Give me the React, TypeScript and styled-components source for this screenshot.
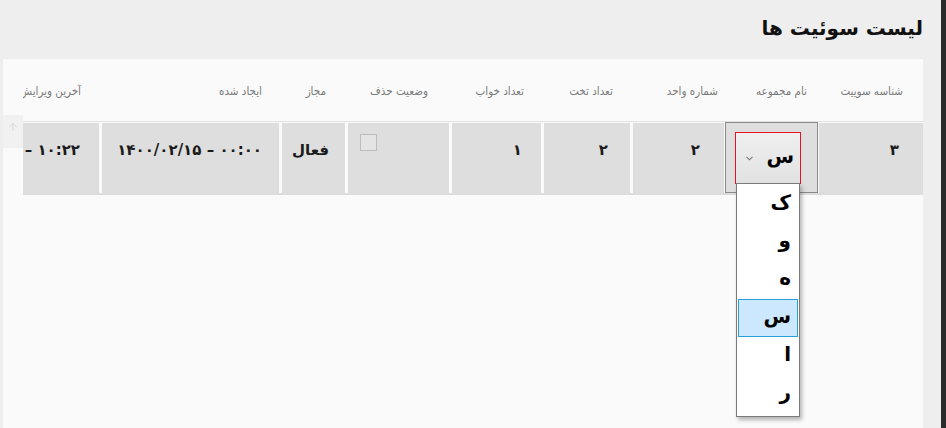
import styled, { createGlobalStyle } from 'styled-components';
import { ArrowUp } from 'lucide-react';

// -- GLOBAL --
const GlobalStyle = createGlobalStyle`
    html, body {
        margin: 0;
        padding: 0;
        height: 100%;
    }
    body {
        background: #eeeeee;
        overflow: hidden;
        font-family: "DejaVu Sans", sans-serif;
    }
    #root {
        height: 100%;
    }
`;

// -- COMPONENTS --
const Page = styled.div`
    display: flex;
    height: 100vh;
    direction: ltr;
`;

const Main = styled.div`
    flex: 1;
    min-width: 0;
    display: flex;
    flex-direction: column;
    padding: 0 18px 0 3px;
    direction: rtl;
`;

const EdgeBar = styled.div`
    width: 5px;
    background: #2b2b2b;
`;

const Title = styled.h1`
    margin: 0;
    height: 59px;
    box-sizing: border-box;
    padding: 0 0 4px 0;
    display: flex;
    align-items: center;
    font-size: 20px;
    font-weight: bold;
    color: #111;
`;

const Panel = styled.div`
    flex: 1;
    display: flex;
    background: #fafafa;
    min-height: 0;
`;

const TableWrap = styled.div`
    width: 900px;
    overflow: hidden;
    position: relative;
`;

const Gutter = styled.div`
    width: 20px;
    padding-top: 56px;
`;

const ScrollUp = styled.div`
    height: 33px;
    background: #f1f1f1;
    display: flex;
    justify-content: center;
    padding-top: 6px;
    box-sizing: border-box;
    color: #cfcfcf;
`;

const Row = styled.div<{ $cols: string }>`
    display: grid;
    grid-template-columns: ${p => p.$cols};
    column-gap: 3px;
`;

const HeadRow = styled(Row)`
    height: 62px;
    border-bottom: 1px solid #e2e2e2;
    align-items: center;
`;

const BodyRow = styled(Row)`
    height: 70px;
    margin-top: 1px;
    border-bottom: 2px solid #dcdcdc;
`;

const HeadCell = styled.div<{ $pad: number }>`
    padding-right: ${p => p.$pad}px;
    font-family: "DejaVu Sans Condensed", "DejaVu Sans", sans-serif;
    font-size: 11.5px;
    color: #7a7a7a;
    white-space: nowrap;
    padding-top: 2px;
`;

const Cell = styled.div<{ $pad: number }>`
    background: #dedede;
    padding: 16px ${p => p.$pad}px 0 0;
    font-size: 15px;
    font-weight: bold;
    line-height: 22px;
    color: #1a1a1a;
    white-space: nowrap;
    min-width: 0;
`;

const CheckCell = styled.div`
    background: #dedede;
    display: flex;
    justify-content: flex-end;
    align-items: flex-start;
    padding: 11px 0 0 12px;
`;

const CheckBox = styled.span`
    width: 15px;
    height: 15px;
    border: 1px solid #bcbcbc;
    background: #e4e4e4;
`;

const SelectCell = styled.div`
    background: #dedede;
    border: 1px solid #8a8a8a;
    margin: -1px -2px 0 -2px;
    padding: 9px 16px 0 0;
    display: flex;
    align-items: flex-start;
`;

const SelectBox = styled.div`
    position: relative;
    width: 66px;
    height: 52px;
    box-sizing: border-box;
    border: 1px solid #e81123;
    background: linear-gradient(#efefef, #e2e2e2);
    display: flex;
    align-items: center;
    justify-content: space-between;
    padding: 0 6px 0 10px;
    direction: rtl;
`;

const SelectValue = styled.span`
    font-size: 20px;
    font-weight: bold;
    color: #000;
    padding-bottom: 4px;
`;

const Chevron = styled.svg`
    width: 7px;
    height: 5px;
`;

const OptionList = styled.ul`
    position: absolute;
    top: 100%;
    right: 0px;
    width: 62px;
    margin: 0;
    padding: 1px 0 3px;
    list-style: none;
    background: #fff;
    border: 1px solid #7a7a7a;
    box-shadow: 2px 3px 4px rgba(0, 0, 0, 0.28);
    z-index: 5;
`;

const Option = styled.li<{ $active?: boolean }>`
    height: 38px;
    box-sizing: border-box;
    margin: 0 1px;
    display: flex;
    align-items: center;
    padding: 0 6px 4px 0;
    font-size: 20px;
    font-weight: bold;
    color: #000;
    background: ${p => (p.$active ? '#cce8ff' : 'transparent')};
    border: 1px solid ${p => (p.$active ? '#26a0da' : 'transparent')};
`;

// -- DATA --
const columns = [
    { head: 'شناسه سوییت', width: 104, headPad: 20 },
    { head: 'نام مجموعه', width: 89, headPad: 9 },
    { head: 'شماره واحد', width: 91, headPad: 6 },
    { head: 'تعداد تخت', width: 86, headPad: 17 },
    { head: 'تعداد خواب', width: 89, headPad: 17 },
    { head: 'وضعیت حذف', width: 101, headPad: 21 },
    { head: 'مجاز', width: 63, headPad: 19 },
    { head: 'ایجاد شده', width: 177, headPad: 17 },
    { head: 'آخرین ویرایش', width: 150, headPad: 18 },
];

const gridCols = columns.map(c => `${c.width}px`).join(' ');

const options = ['ک', 'و', 'ه', 'س', 'ا', 'ر'];

const App = () => {
    return (
        <>
            <GlobalStyle />
            <Page>
                <Main>
                    <Title>لیست سوئیت ها</Title>
                    <Panel>
                        <TableWrap>
                            <HeadRow $cols={gridCols}>
                                {columns.map(c => (
                                    <HeadCell key={c.head} $pad={c.headPad}>{c.head}</HeadCell>
                                ))}
                            </HeadRow>
                            <BodyRow $cols={gridCols}>
                                <Cell $pad={24}>۳</Cell>
                                <SelectCell>
                                    <SelectBox>
                                        <SelectValue>س</SelectValue>
                                        <Chevron viewBox="0 0 7 5">
                                            <path d="M0.5 0.8 L3.5 3.8 L6.5 0.8" fill="none" stroke="#777" strokeWidth="1.1" />
                                        </Chevron>
                                        <OptionList>
                                            {options.map(o => (
                                                <Option key={o} $active={o === 'س'}>{o}</Option>
                                            ))}
                                        </OptionList>
                                    </SelectBox>
                                </SelectCell>
                                <Cell $pad={24}>۲</Cell>
                                <Cell $pad={22}>۲</Cell>
                                <Cell $pad={19}>۱</Cell>
                                <CheckCell><CheckBox /></CheckCell>
                                <Cell $pad={16}>فعال</Cell>
                                <Cell $pad={17}>۰۰:۰۰ – ۱۴۰۰/۰۲/۱۵</Cell>
                                <Cell $pad={19}>۱۰:۲۲ – ۱۴۰۰/۰۲/۱۵</Cell>
                            </BodyRow>
                        </TableWrap>
                        <Gutter>
                            <ScrollUp><ArrowUp size={12} strokeWidth={1.5} /></ScrollUp>
                        </Gutter>
                    </Panel>
                </Main>
                <EdgeBar />
            </Page>
        </>
    );
};

export default App;
